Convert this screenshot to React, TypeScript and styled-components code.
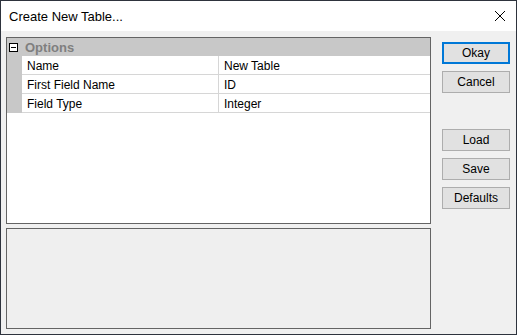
import React from "react";
import styled, { createGlobalStyle } from "styled-components";

const GlobalStyle = createGlobalStyle`
  html, body {
    margin: 0;
    padding: 0;
    background: #ffffff;
  }
  body {
    font-family: "Liberation Sans", Arial, sans-serif;
    font-size: 12px;
    color: #000000;
  }
`;

const Window = styled.div`
  width: 517px;
  height: 335px;
  box-sizing: border-box;
  border: 1px solid #2e333d;
  background: #f0f0f0;
  display: flex;
  flex-direction: column;
`;

const TitleBar = styled.div`
  height: 30px;
  background: #ffffff;
  display: flex;
  align-items: center;
  justify-content: space-between;
  padding: 0 10px 0 8px;
  font-size: 13px;
`;

const CloseIcon = () => (
  <svg width="12" height="12" viewBox="0 0 12 12">
    <path d="M1 1 L11 11 M11 1 L1 11" stroke="#000" strokeWidth="1" />
  </svg>
);

const Body = styled.div`
  flex: 1;
  display: flex;
  padding: 6px 5px 5px 5px;
  gap: 11px;
`;

const LeftColumn = styled.div`
  width: 425px;
  display: flex;
  flex-direction: column;
  gap: 4px;
`;

const Grid = styled.div`
  height: 187px;
  box-sizing: border-box;
  border: 1px solid #646464;
  background: #ffffff;
  display: grid;
  grid-template-columns: 15px 197px 1fr;
  grid-auto-rows: min-content;
  align-content: start;
`;

const CategoryRow = styled.div`
  grid-column: 1 / -1;
  height: 18px;
  background: #c8c8c8;
  display: flex;
  align-items: center;
  gap: 7px;
  padding-left: 2px;
  font-weight: bold;
  font-size: 13px;
  color: #7f7f7f;
`;

const ExpandBox = styled.span`
  width: 9px;
  height: 9px;
  box-sizing: border-box;
  border: 1px solid #000;
  background: #ffffff;
  position: relative;
  &::after {
    content: "";
    position: absolute;
    left: 1px;
    right: 1px;
    top: 3px;
    height: 1px;
    background: #000;
  }
`;

const Gutter = styled.div`
  background: #c8c8c8;
  height: 19px;
`;

const Cell = styled.div<{ $split?: boolean }>`
  height: 19px;
  box-sizing: border-box;
  border-bottom: 1px solid #d6d6d6;
  border-right: ${(p) => (p.$split ? "1px solid #d6d6d6" : "none")};
  padding-left: 5px;
  padding-top: 1px;
  display: flex;
  align-items: center;
  white-space: nowrap;
`;

const InfoPanel = styled.div`
  height: 101px;
  box-sizing: border-box;
  border: 1px solid #646464;
  background: #efefef;
`;

const ButtonColumn = styled.div`
  display: flex;
  flex-direction: column;
  gap: 7px;
  padding-top: 5px;
`;

const Button = styled.button<{ $default?: boolean }>`
  width: 68px;
  height: 22px;
  box-sizing: border-box;
  margin: 0;
  padding: 0;
  font-family: inherit;
  font-size: 12px;
  color: #000;
  background: #e1e1e1;
  border: ${(p) => (p.$default ? "2px solid #0078d7" : "1px solid #adadad")};
`;

const Spacer = styled.div`
  height: 22px;
`;

const rows = [
  ["Name", "New Table"],
  ["First Field Name", "ID"],
  ["Field Type", "Integer"],
];

export default function App() {
  return (
    <>
      <GlobalStyle />
      <Window>
        <TitleBar>
          <span>Create New Table...</span>
          <CloseIcon />
        </TitleBar>
        <Body>
          <LeftColumn>
            <Grid>
              <CategoryRow>
                <ExpandBox />
                Options
              </CategoryRow>
              {rows.map(([name, value]) => (
                <React.Fragment key={name}>
                  <Gutter />
                  <Cell $split>{name}</Cell>
                  <Cell>{value}</Cell>
                </React.Fragment>
              ))}
            </Grid>
            <InfoPanel />
          </LeftColumn>
          <ButtonColumn>
            <Button $default>Okay</Button>
            <Button>Cancel</Button>
            <Spacer />
            <Button>Load</Button>
            <Button>Save</Button>
            <Button>Defaults</Button>
          </ButtonColumn>
        </Body>
      </Window>
    </>
  );
}
